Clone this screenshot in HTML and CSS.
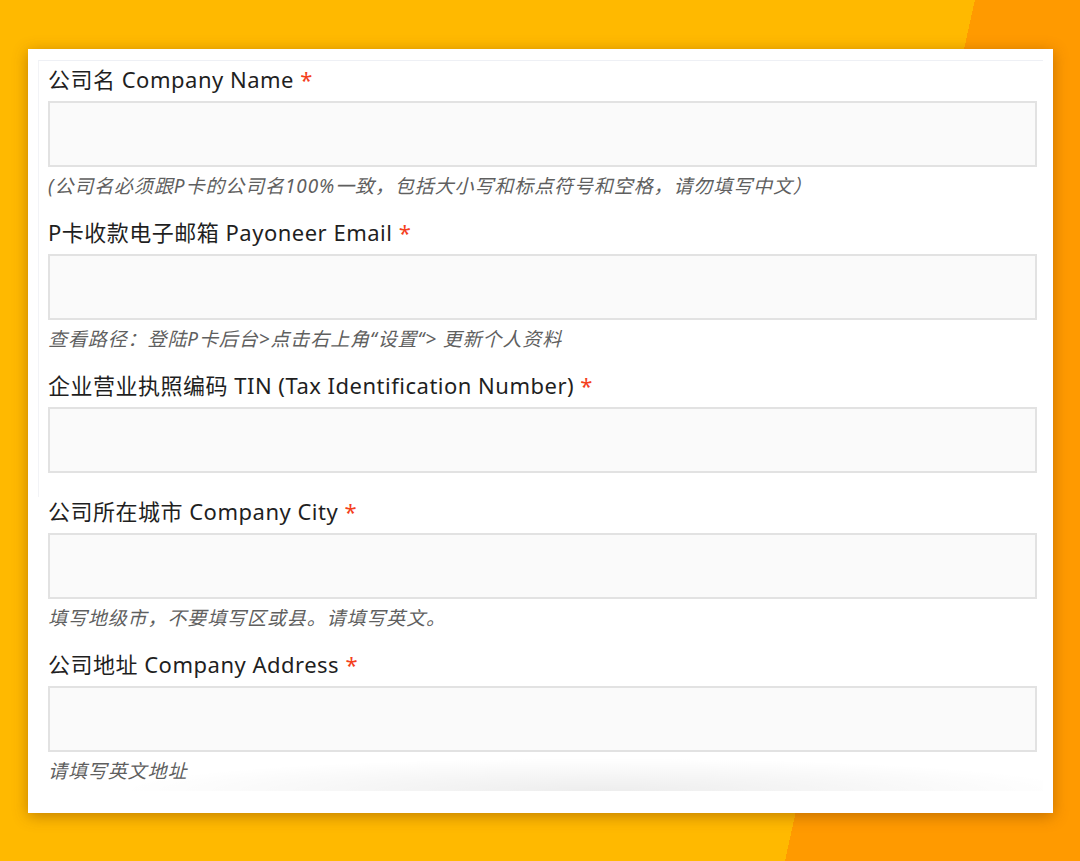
FILE: index.html
```html
<!DOCTYPE html>
<html lang="zh-CN">
<head>
    <meta charset="UTF-8">
    <meta name="viewport" content="width=device-width, initial-scale=1.0">
    <title>Payoneer 信息填写</title>
    <link rel="stylesheet" href="styles.css">
</head>
<body>
    <div class="page">
        <div class="card">
            <div class="panel">
                <div class="field">
                    <label for="companyName">公司名 Company Name <span class="req">*</span></label>
                    <input type="text" id="companyName" name="companyName">
                    <div class="hint">(公司名必须跟P卡的公司名100%一致，包括大小写和标点符号和空格，请勿填写中文）</div>
                </div>

                <div class="field">
                    <label for="payoneerEmail">P卡收款电子邮箱 Payoneer Email <span class="req">*</span></label>
                    <input type="text" id="payoneerEmail" name="payoneerEmail">
                    <div class="hint">查看路径：登陆P卡后台&gt;点击右上角“设置“&gt; 更新个人资料</div>
                </div>

                <div class="field last">
                    <label for="tin">企业营业执照编码 TIN (Tax Identification Number) <span class="req">*</span></label>
                    <input type="text" id="tin" name="tin">
                </div>
            </div>

            <div class="rest">
                <div class="field">
                    <label for="companyCity">公司所在城市 Company City <span class="req">*</span></label>
                    <input type="text" id="companyCity" name="companyCity">
                    <div class="hint">填写地级市，不要填写区或县。请填写英文。</div>
                </div>

                <div class="field last">
                    <label for="companyAddress">公司地址 Company Address <span class="req">*</span></label>
                    <input type="text" id="companyAddress" name="companyAddress">
                    <div class="hint shade">请填写英文地址</div>
                </div>
            </div>
        </div>
    </div>
</body>
</html>
```

FILE: styles.css
```css
html, body {
    margin: 0;
    padding: 0;
}
body {
    font-family: "Noto Sans", "Noto Sans CJK SC", sans-serif;
    color: #1f1f1f;
}
.page {
    min-height: 100vh;
    box-sizing: border-box;
    padding: 49px 27px 49px 28px;
    /* yellow backdrop with the orange slanted panel on the right */
    background: linear-gradient(102.44deg, #ffb900 952px, #ff9a00 952px);
}
.card {
    background: #fff;
    padding: 11px 10px 22px;
    box-shadow: 0 3px 14px rgba(120, 60, 0, 0.45);
}
.panel {
    border-top: 1px solid #eef0f5;
    border-left: 1px solid #f2f3f6;
    padding: 4px 6px 24px 9px;
}
.rest {
    padding: 0 6px 0 10px;
}
.field {
    margin-bottom: 19px;
}
.field.last {
    margin-bottom: 0;
}
label {
    display: block;
    font-size: 22px;
    line-height: 28px;
    letter-spacing: 0.5px;
    margin-bottom: 8px;
    color: #1f1f1f;
}
.req {
    color: #f4401c;
}
input[type="text"] {
    display: block;
    width: 100%;
    height: 66px;
    box-sizing: border-box;
    padding: 0 12px;
    border: 2px solid #e2e2e2;
    background: #fafafa;
    font-size: 18px;
    font-family: inherit;
    outline: none;
}
.hint {
    margin-top: 6px;
    font-size: 19px;
    line-height: 26px;
    letter-spacing: 0.9px;
    font-style: italic;
    color: #5f5f5f;
}
.hint.shade {
    padding-bottom: 7px;
    margin-left: -10px;
    padding-left: 10px;
    margin-right: -6px;
    background: radial-gradient(ellipse 48% 100% at 56% 100%, rgba(0, 0, 0, 0.07), rgba(0, 0, 0, 0) 100%);
}
```
